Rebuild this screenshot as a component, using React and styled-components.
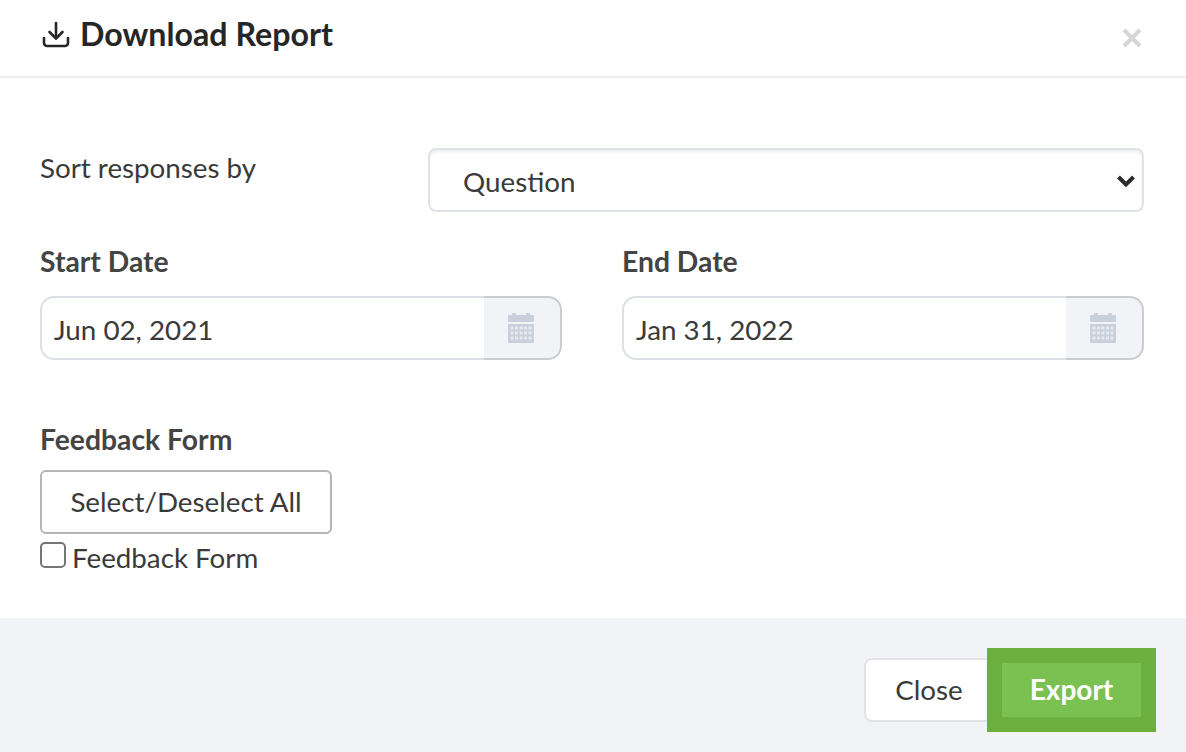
import React from 'react';
import styled, { createGlobalStyle } from 'styled-components';

const GlobalStyle = createGlobalStyle`
  html, body { margin: 0; padding: 0; background: #fff; }
  * { box-sizing: border-box; }
  body { font-family: Lato, "Liberation Sans", sans-serif; color: #333; }
`;

const Modal = styled.div`
  width: 1186px;
  height: 752px;
  display: flex;
  flex-direction: column;
  overflow: hidden;
`;

const Header = styled.header`
  height: 78px;
  flex: none;
  display: flex;
  align-items: center;
  justify-content: space-between;
  padding: 0 44px 8px 42px;
  border-bottom: 2px solid #eeeeee;
`;

const Title = styled.h4`
  margin: -1px 0 0;
  display: flex;
  align-items: center;
  gap: 10px;
  font-size: 32.2px;
  font-weight: 700;
  color: #262626;
`;

const CloseX = styled.span`
  color: #d6d6d6;
  display: flex;
  margin-top: 8px;
`;

const Body = styled.main`
  flex: 1;
  padding: 71px 42px 0 40px;
  display: flex;
  flex-direction: column;
`;

const SortRow = styled.div`
  display: flex;
  justify-content: space-between;
`;

const SortLabel = styled.div`
  font-size: 27.75px;
  line-height: 38px;
  color: #3a3a3a;
`;

const SelectBox = styled.div`
  width: 716px;
  height: 64px;
  margin-top: -1px;
  border: 2px solid #dfe2e8;
  border-radius: 8px;
  box-shadow: inset 0 2px 3px rgba(0, 0, 0, 0.07);
  padding: 2px 6px 0 33px;
  display: flex;
  align-items: center;
  justify-content: space-between;
  font-size: 27.75px;
  color: #3a3a3a;
`;

const DateRow = styled.div`
  display: grid;
  grid-template-columns: 522px 522px;
  justify-content: space-between;
  margin-top: 30px;
`;

const Field = styled.div`
  display: flex;
  flex-direction: column;
`;

const BoldLabel = styled.label`
  display: block;
  font-size: 28.3px;
  font-weight: 700;
  line-height: 38px;
  color: #444;
  margin-bottom: 16px;
`;

const DateInput = styled.div`
  height: 64px;
  display: flex;
`;

const DateValue = styled.div`
  flex: 1;
  border: 2px solid #dcdfe5;
  border-right: none;
  border-radius: 14px 0 0 14px;
  padding: 2px 0 0 12px;
  display: flex;
  align-items: center;
  font-size: 27.75px;
  color: #3a3a3a;
`;

const CalAddon = styled.div`
  width: 78px;
  border: 2px solid #cbcdd0;
  border-left: none;
  border-radius: 0 14px 14px 0;
  padding-right: 2px;
  background: #f1f3f7;
  display: flex;
  align-items: center;
  justify-content: center;
`;

const FormSection = styled.section`
  margin-top: 60px;
`;

const SelectAll = styled.button`
  display: block;
  width: 292px;
  height: 64px;
  margin-top: -4px;
  padding: 0 0 2px;
  background: #fff;
  border: 2px solid #b5b5b5;
  border-radius: 6px;
  font: 400 27.75px Lato, "Liberation Sans", sans-serif;
  color: #3a3a3a;
`;

const CheckRow = styled.label`
  display: flex;
  align-items: flex-start;
  gap: 6px;
  margin-top: 8px;
  font-size: 27.75px;
  line-height: 32px;
  color: #3a3a3a;
`;

const CheckBox = styled.span`
  width: 26px;
  height: 26px;
  border: 2px solid #767676;
  border-radius: 5px;
  background: #fff;
`;

const Footer = styled.footer`
  height: 134px;
  flex: none;
  background: #f1f3f7;
  display: flex;
  justify-content: flex-end;
  align-items: flex-start;
  padding: 40px 40px 0 0;
`;

const CloseButton = styled.button`
  width: 140px;
  height: 64px;
  background: #fff;
  border: 2px solid #e3e3e3;
  border-radius: 8px 0 0 8px;
  padding: 0 10px 2px 0;
  margin-right: -7px;
  font: 400 27.75px Lato, "Liberation Sans", sans-serif;
  color: #3a3a3a;
`;

const ExportButton = styled.button`
  position: relative;
  width: 149px;
  height: 64px;
  background: #7bc152;
  border: 5px solid #6bb03f;
  outline: 10px solid #6bb03f;
  border-radius: 0;
  padding: 0 0 2px 0;
  font: 700 28px Lato, "Liberation Sans", sans-serif;
  color: #fff;
`;

const DownloadIcon = () => (
  <svg width="28" height="28" viewBox="0 0 28 28" fill="none" stroke="#262626" strokeWidth="2.6" strokeLinecap="round" strokeLinejoin="round">
    <path d="M14 3v15" />
    <path d="M7.5 12l6.5 6.5 6.5-6.5" />
    <path d="M2 18v5a3 3 0 0 0 3 3h18a3 3 0 0 0 3-3v-5" />
  </svg>
);

const XIcon = () => (
  <svg width="20" height="20" viewBox="0 0 20 20" stroke="currentColor" strokeWidth="4.2">
    <path d="M2 2l16 16M18 2L2 18" />
  </svg>
);

const Chevron = () => (
  <svg width="20" height="14" viewBox="0 0 20 14" fill="none" stroke="#2b2b2b" strokeWidth="4">
    <path d="M2.5 3l7.5 7.5L17.5 3" />
  </svg>
);

const CalendarIcon = () => (
  <svg width="26" height="30" viewBox="0 0 26 30" fill="#c9d0dc">
    <rect x="4" y="0" width="4" height="4" rx="1" />
    <rect x="18" y="0" width="4" height="4" rx="1" />
    <rect x="0" y="2" width="26" height="7" rx="1" />
    <path fillRule="evenodd" d="M0 11h26v18a1 1 0 0 1-1 1H1a1 1 0 0 1-1-1z" />
    <g fill="#e6e9ef">
      {[13.5, 18.5, 23.5].map((y) =>
        [2.5, 7, 11.5, 16, 20.5].map((x) => <rect key={`${x}-${y}`} x={x} y={y} width="3" height="3" />)
      )}
    </g>
  </svg>
);

const DateField = ({ label, value }) => (
  <Field>
    <BoldLabel>{label}</BoldLabel>
    <DateInput>
      <DateValue>{value}</DateValue>
      <CalAddon>
        <CalendarIcon />
      </CalAddon>
    </DateInput>
  </Field>
);

export default function App() {
  return (
    <Modal>
      <GlobalStyle />
      <Header>
        <Title>
          <DownloadIcon />
          Download Report
        </Title>
        <CloseX>
          <XIcon />
        </CloseX>
      </Header>
      <Body>
        <SortRow>
          <SortLabel>Sort responses by</SortLabel>
          <SelectBox>
            Question
            <Chevron />
          </SelectBox>
        </SortRow>
        <DateRow>
          <DateField label="Start Date" value="Jun 02, 2021" />
          <DateField label="End Date" value="Jan 31, 2022" />
        </DateRow>
        <FormSection>
          <BoldLabel>Feedback Form</BoldLabel>
          <SelectAll>Select/Deselect All</SelectAll>
          <CheckRow>
            <CheckBox />
            Feedback Form
          </CheckRow>
        </FormSection>
      </Body>
      <Footer>
        <CloseButton>Close</CloseButton>
        <ExportButton>Export</ExportButton>
      </Footer>
    </Modal>
  );
}
